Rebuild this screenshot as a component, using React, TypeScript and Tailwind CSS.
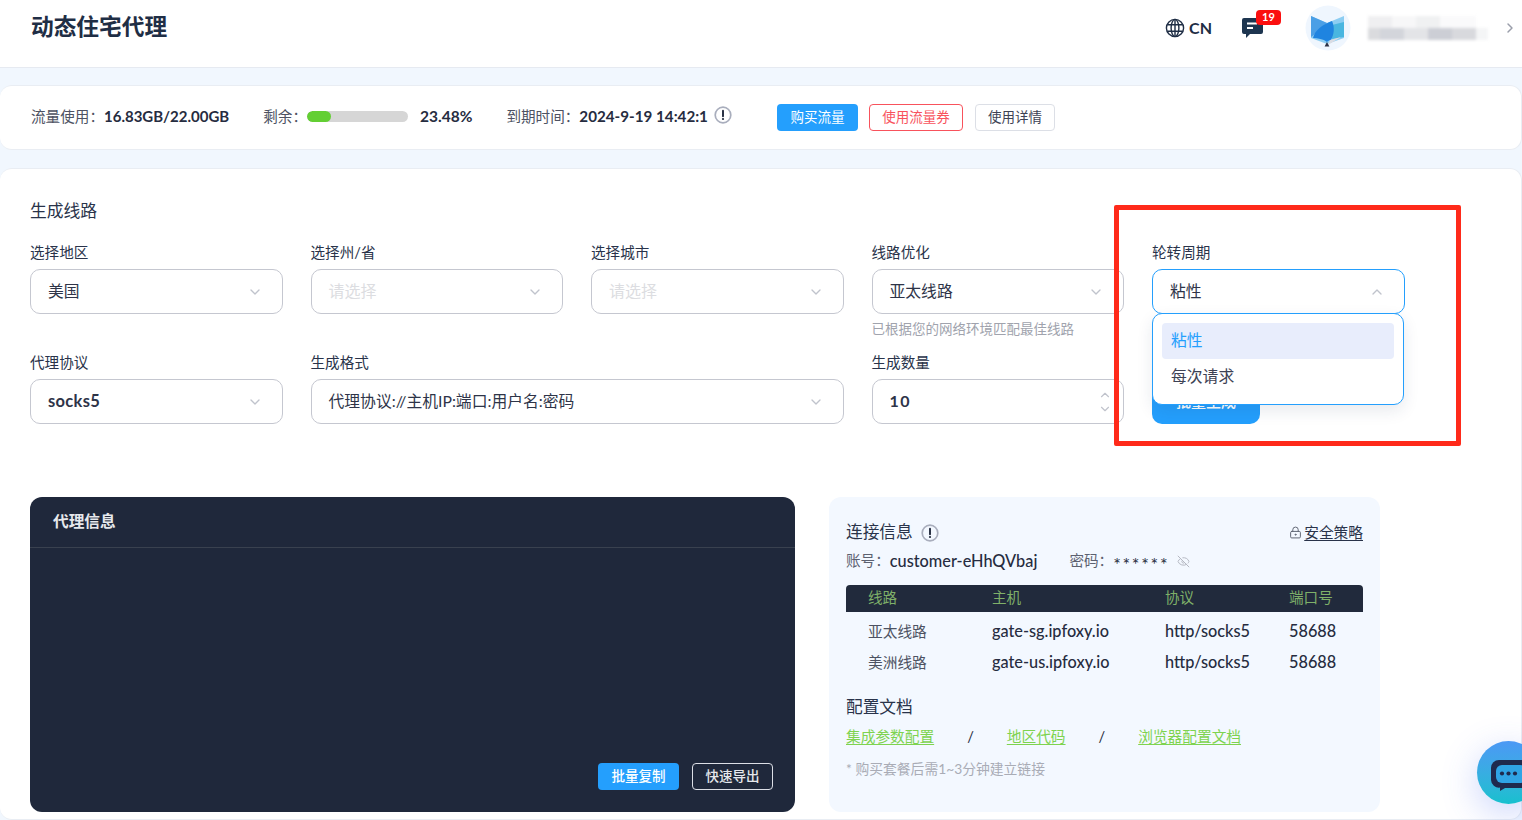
import { ChevronDown, ChevronRight, ChevronUp, EyeOff, LockKeyhole } from 'lucide-react';

const fontStack = "font-['Lato','Noto_Sans_CJK_SC',sans-serif]";

const InfoIcon = ({ size = 18 }: { size?: number }) => (
  <svg width={size} height={size} viewBox="0 0 18 18" fill="none">
    <circle cx="9" cy="9" r="7.8" stroke="#a9aebd" strokeWidth="1.7" />
    <path d="M9 4.6v5.6" stroke="#1f283b" strokeWidth="1.9" strokeLinecap="round" />
    <circle cx="9" cy="13" r="1.1" fill="#1f283b" />
  </svg>
);

const Select = ({ value, placeholder, bold }: { value?: string; placeholder?: string; bold?: boolean }) => (
  <div className="flex h-[45px] items-center justify-between rounded-[10px] border border-[#c5c7d0] bg-white pl-[17px] pr-[19px]">
    {value ? (
      <span className={`text-[#2e3448] ${bold ? 'text-[16.5px] font-bold tracking-[0.3px]' : 'pb-[2px] text-[15.8px]'}`}>{value}</span>
    ) : (
      <span className="pb-[2px] text-[16px] text-[#dcdde1]">{placeholder}</span>
    )}
    <ChevronDown className="h-[16px] w-[16px] text-[#c0c3cc]" strokeWidth={2} />
  </div>
);

const Field = ({ label, children, className = '' }: { label: string; children: React.ReactNode; className?: string }) => (
  <div className={className}>
    <div className="mb-[6px] h-[20px] text-[14.6px] leading-[20px] text-[#29334a]">{label}</div>
    {children}
  </div>
);

const rows = [
  { name: '亚太线路', host: 'gate-sg.ipfoxy.io' },
  { name: '美洲线路', host: 'gate-us.ipfoxy.io' },
];

const Logo = () => (
  <svg width="50" height="46" viewBox="0 0 50 46">
    <circle cx="23" cy="23" r="22.5" fill="#eff6fe" />
    <path d="M6 11l16 7 17-7v22l-17 6-16-6z" fill="#8ccdf2" />
    <path d="M27 20l12-3v15l-12 2z" fill="#49b6e0" />
    <path d="M6 11l16 7-5 6-11 8z" fill="#4a9fe6" />
    <path d="M8 33c2-8 9-13 19-17 3 7 2 13-1 19-2 0-3 1-4 2-4-3-9-4-14-4z" fill="#1f84e0" />
    <path d="M25 35l11-3-13 8z" fill="#dadce3" />
    <path d="M22 37l2.4 4.5h-4.8z" fill="#2b3145" />
  </svg>
);

const GlobeIcon = () => (
  <svg width="20" height="20" viewBox="0 0 20 20" fill="none" stroke="#1f2e45" strokeWidth="1.4">
    <circle cx="10" cy="10" r="8.6" />
    <ellipse cx="10" cy="10" rx="3.9" ry="8.6" />
    <path d="M10 1.4v17.2M2.2 6.8h15.6M2.2 13.2h15.6" />
  </svg>
);

export default function App() {
  return (
    <div className={`relative h-[820px] overflow-hidden bg-[#f1f7fe] ${fontStack}`}>
      {/* Header */}
      <header className="flex h-[68px] items-center justify-between border-b border-[#e6eaf1] bg-white pb-[13px] pl-[31px] pr-[4px]">
        <h1 className="text-[22.7px] font-bold leading-none text-[#1f2e45]">动态住宅代理</h1>
        <div className="flex items-center pt-[1px]">
          <GlobeIcon />
          <span className="ml-[4px] text-[16px] font-bold text-[#1f2e45]">CN</span>
          <div className="relative ml-[29px] mr-[41px]">
            <svg width="23" height="23" viewBox="0 0 23 23">
              <path d="M3 2h17a2 2 0 0 1 2 2v12a2 2 0 0 1-2 2H9l-4 4v-4H3a2 2 0 0 1-2-2V4a2 2 0 0 1 2-2z" fill="#1d3550" />
              <path d="M6 7.5h10M6 12h6" stroke="#fff" strokeWidth="1.8" />
            </svg>
            <span className="absolute -top-[6px] left-[15px] flex h-[15px] w-[25px] items-center justify-center rounded-[4px] bg-[#fb0f0f] text-[11px] font-bold text-white">
              19
            </span>
          </div>
          <Logo />
          {/* blurred account name */}
          <div className="ml-[13px] w-[122px] blur-[1.5px]">
            <div className="flex h-[12px]">
              <div className="w-[24px] bg-[#efeff1]" />
              <div className="w-[24px] bg-[#f7f7f8]" />
              <div className="w-[24px] bg-[#f0f1f2]" />
              <div className="w-[36px] bg-[#fafafb]" />
            </div>
            <div className="flex h-[12px]">
              <div className="w-[12px] bg-[#dadbde]" />
              <div className="w-[24px] bg-[#d3d5db]" />
              <div className="w-[24px] bg-[#e3e4e7]" />
              <div className="w-[24px] bg-[#ccced5]" />
              <div className="w-[24px] bg-[#d8d9dd]" />
              <div className="w-[12px] bg-[#f4f5f6]" />
            </div>
          </div>
          <ChevronRight className="ml-[12px] h-[16px] w-[16px] text-[#9a9eaa]" strokeWidth={2.2} />
        </div>
      </header>

      {/* Usage */}
      <section className="mt-[17px] flex h-[65px] items-center rounded-[12px] border border-l-0 border-[#e9edf3] bg-white pb-[2px] pl-[31px]">
        <span className="text-[14.6px] text-[#4d5262]">流量使用：</span>
        <span className="text-[15px] font-bold text-[#262c40]">16.83GB/22.00GB</span>
        <span className="ml-[34px] text-[14.6px] text-[#4d5262]">剩余：</span>
        <div className="h-[11px] w-[101px] overflow-hidden rounded-full bg-[#d6d6d6]">
          <div className="h-full w-[24px] rounded-full bg-[#63cf33]" />
        </div>
        <span className="ml-[12px] text-[15.5px] font-bold text-[#262c40]">23.48%</span>
        <span className="ml-[34px] text-[14.6px] text-[#4d5262]">到期时间：</span>
        <span className="text-[15.2px] font-bold text-[#262c40]">2024-9-19 14:42:1</span>
        <span className="mb-[3px] ml-[6px]">
          <InfoIcon />
        </span>
        <button className="ml-[45px] mt-[2px] h-[27px] w-[81px] rounded-[4px] bg-[#249ffd] text-[13.5px] text-white">购买流量</button>
        <button className="ml-[11px] mt-[2px] h-[27px] w-[94px] rounded-[4px] border border-[#f8525c] bg-white text-[13.5px] text-[#f8525c]">使用流量券</button>
        <button className="ml-[12px] mt-[2px] h-[27px] w-[80px] rounded-[4px] border border-[#dcdfe6] bg-white text-[13.5px] text-[#3d4254]">使用详情</button>
      </section>

      {/* Generator */}
      <main className="mt-[18px] h-[652px] rounded-[12px] border border-l-0 border-[#e9edf3] bg-white pl-[30px] pt-[30px]">
        <h2 className="h-[24px] text-[16.8px] leading-[24px] text-[#29334a]">生成线路</h2>
        <div className="mt-[20px] grid grid-cols-[repeat(5,252.5px)] auto-rows-[110px] gap-x-[28px]">
          <Field label="选择地区"><Select value="美国" /></Field>
          <Field label="选择州/省"><Select placeholder="请选择" /></Field>
          <Field label="选择城市"><Select placeholder="请选择" /></Field>
          <Field label="线路优化">
            <Select value="亚太线路" />
            <p className="mt-[5px] text-[13.5px] text-[#a0a3ad]">已根据您的网络环境匹配最佳线路</p>
          </Field>
          <Field label="轮转周期" className="relative">
            <div className="flex h-[45px] items-center justify-between rounded-[10px] border border-[#249ffd] bg-white pl-[17px] pr-[19px]">
              <span className="pb-[2px] text-[15.8px] text-[#2e3448]">粘性</span>
              <ChevronUp className="h-[16px] w-[16px] text-[#c0c3cc]" strokeWidth={2} />
            </div>
            <div className="absolute left-0 top-[70px] z-10 h-[92px] w-[252px] rounded-[10px] border border-[#249ffd] bg-white px-[9px] pt-[9px] shadow-[0_6px_16px_rgba(30,50,90,0.10)]">
              <div className="flex h-[36px] items-center rounded-[4px] bg-[#e8edfc] pb-[2px] pl-[9px] text-[15.8px] text-[#249ffd]">粘性</div>
              <div className="flex h-[36px] items-center pb-[2px] pl-[9px] text-[15.8px] text-[#3d4254]">每次请求</div>
            </div>
          </Field>

          <Field label="代理协议"><Select value="socks5" bold /></Field>
          <Field label="生成格式" className="col-span-2"><Select value="代理协议://主机IP:端口:用户名:密码" /></Field>
          <Field label="生成数量">
            <div className="flex h-[45px] items-center justify-between rounded-[10px] border border-[#c5c7d0] bg-white pl-[17px] pr-[11px]">
              <span className="pb-[1px] text-[16px] font-bold tracking-[1.5px] text-[#2e3448]">10</span>
              <div className="flex flex-col text-[#c0c3cc]">
                <ChevronUp className="h-[14px] w-[14px]" strokeWidth={2} />
                <ChevronDown className="h-[14px] w-[14px]" strokeWidth={2} />
              </div>
            </div>
          </Field>
          <div className="pt-[26px]">
            <button className="h-[45px] w-[108px] rounded-[10px] bg-[#249ffd] text-[15px] font-medium text-white">批量生成</button>
          </div>
        </div>

        <div className="mt-[34px] flex items-start">
          {/* Proxy info */}
          <div className="flex h-[315px] w-[765px] flex-col rounded-[12px] bg-[#1f283b]">
            <div className="flex h-[51px] items-center border-b border-[#39414f] pl-[23px] text-[15.7px] font-bold text-[#e6e8ec]">代理信息</div>
            <div className="mt-auto flex justify-end gap-[13px] pb-[22px] pr-[22px]">
              <button className="h-[27px] w-[81px] rounded-[4px] bg-[#249ffd] text-[13.5px] font-medium text-white">批量复制</button>
              <button className="h-[27px] w-[81px] rounded-[4px] border border-[#dcdfe6] text-[13.5px] font-medium text-[#e6e8ec]">快速导出</button>
            </div>
          </div>

          {/* Connection info */}
          <div className="ml-[34px] h-[315px] w-[551px] rounded-[12px] bg-[#f3f8ff] px-[17px] pt-[24px]">
            <div className="flex h-[22px] items-center justify-between">
              <div className="flex items-center gap-[8px] pt-[1px] text-[16.7px] text-[#29334a]">
                连接信息
                <InfoIcon />
              </div>
              <div className="flex items-center gap-[2px] text-[14.7px] text-[#29334a]">
                <LockKeyhole className="h-[13px] w-[13px] text-[#5e6472]" strokeWidth={1.8} />
                <span className="underline underline-offset-2">安全策略</span>
              </div>
            </div>
            <div className="mt-[7px] flex h-[22px] items-center text-[14.6px]">
              <span className="text-[#5c6170]">账号：</span>
              <span className="text-[16.3px] font-medium text-[#262c40]">customer-eHhQVbaj</span>
              <span className="ml-[32px] text-[#5c6170]">密码：</span>
              <span className="mt-[5px] text-[18px] leading-none tracking-[1.7px] text-[#262c40]">******</span>
              <EyeOff className="ml-[8px] h-[13px] w-[13px] text-[#b3b6c0]" strokeWidth={1.8} />
            </div>
            <div className="mt-[13px] grid h-[27px] grid-cols-[124px_173px_124px_1fr] items-center rounded-t-[4px] bg-[#212a3c] pb-[2px] pl-[22px] text-[14.6px] text-[#7fb069]">
              <span>线路</span>
              <span>主机</span>
              <span>协议</span>
              <span>端口号</span>
            </div>
            <div className="pt-[4px]">
              {rows.map((r) => (
                <div key={r.name} className="grid h-[31px] grid-cols-[124px_173px_124px_1fr] items-center pl-[22px] text-[16.3px] font-medium text-[#262c40]">
                  <span className="text-[14.7px] font-normal text-[#4d5262]">{r.name}</span>
                  <span>{r.host}</span>
                  <span>http/socks5</span>
                  <span>58688</span>
                </div>
              ))}
            </div>
            <h3 className="mt-[17px] text-[16.7px] leading-[24px] text-[#29334a]">配置文档</h3>
            <div className="mt-[6px] flex h-[22px] items-center text-[14.7px] text-[#7ed34f]">
              <span className="underline underline-offset-2">集成参数配置</span>
              <span className="mx-[33px] text-[#262c40]">/</span>
              <span className="underline underline-offset-2">地区代码</span>
              <span className="mx-[33px] text-[#262c40]">/</span>
              <span className="underline underline-offset-2">浏览器配置文档</span>
            </div>
            <p className="mt-[12px] text-[13.8px] text-[#a9acb6]">* 购买套餐后需1~3分钟建立链接</p>
          </div>
        </div>
      </main>

      {/* Annotation box */}
      <div className="pointer-events-none absolute left-[1114px] top-[205px] z-20 h-[241px] w-[347px] rounded-[2px] border-[5px] border-[#ff2a1a]" />

      {/* Chat */}
      <div className="absolute left-[1477px] top-[741px] z-20 flex h-[63px] w-[63px] items-start rounded-full bg-gradient-to-b from-[#4b98f5] to-[#16c0ce] pl-[12px] pt-[17px] shadow-[0_10px_36px_rgba(70,100,240,0.28)]">
        <svg width="44" height="34" viewBox="0 0 44 34" className="shrink-0">
          <path d="M10 2h24a8 8 0 0 1 8 8v12a8 8 0 0 1-8 8H16l-5 3v-3.4A8 8 0 0 1 2 22V10a8 8 0 0 1 8-8z" fill="#1f2a4d" />
          <rect x="7" y="7" width="30" height="18" rx="6" fill="#2fa4e5" />
          <circle cx="13" cy="15.5" r="2.1" fill="#1f2a4d" />
          <circle cx="19.5" cy="15.5" r="2.1" fill="#1f2a4d" />
          <circle cx="26" cy="15.5" r="2.1" fill="#1f2a4d" />
        </svg>
      </div>
    </div>
  );
}
